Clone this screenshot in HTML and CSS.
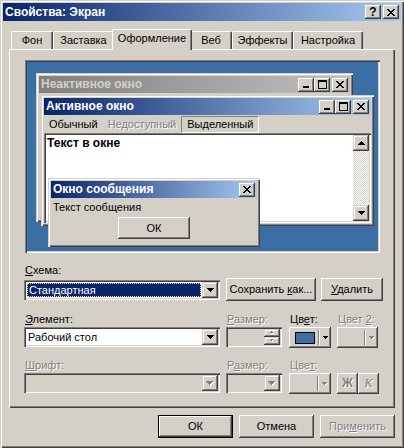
FILE: index.html
```html
<!DOCTYPE html>
<html lang="ru">
<head>
    <meta charset="UTF-8">
    <title>Свойства: Экран</title>
    <link rel="stylesheet" href="styles.css">
</head>
<body>
<div class="window">
    <div class="titlebar">
        <span class="title">Свойства: Экран</span>
        <span class="capbtn help">?</span>
        <span class="capbtn">
            <svg width="8" height="7"><path d="M0 0h2v1H0zM6 0h2v1H6zM1 1h2v1H1zM5 1h2v1H5zM2 2h4v1H2zM3 3h2v1H3zM2 4h4v1H2zM1 5h2v1H1zM5 5h2v1H5zM0 6h2v1H0zM6 6h2v1H6z"/></svg>
        </span>
    </div>

    <div class="tabs">
        <div class="tab w42">Фон</div>
        <div class="tab w61">Заставка</div>
        <div class="tab active">Оформление</div>
        <div class="tab w42">Веб</div>
        <div class="tab w61">Эффекты</div>
        <div class="tab w70">Настройка</div>
    </div>

    <div class="panel">
        <div class="preview">
            <div class="pwin inactive">
                <div class="pcap">
                    <span class="pcap-title">Неактивное окно</span>
                    <span class="capbtn min"><svg width="8" height="7"><path d="M1 5h6v2H1z"/></svg></span>
                    <span class="capbtn max"><svg width="9" height="9"><path d="M0 0h9v2H0zM0 2h1v7H0zM8 2h1v7H8zM1 8h7v1H1z"/></svg></span>
                    <span class="capbtn"><svg width="8" height="7"><path d="M0 0h2v1H0zM6 0h2v1H6zM1 1h2v1H1zM5 1h2v1H5zM2 2h4v1H2zM3 3h2v1H3zM2 4h4v1H2zM1 5h2v1H1zM5 5h2v1H5zM0 6h2v1H0zM6 6h2v1H6z"/></svg></span>
                </div>
            </div>

            <div class="pwin active-win">
                <div class="pcap">
                    <span class="pcap-title">Активное окно</span>
                    <span class="capbtn min"><svg width="8" height="7"><path d="M1 5h6v2H1z"/></svg></span>
                    <span class="capbtn max"><svg width="9" height="9"><path d="M0 0h9v2H0zM0 2h1v7H0zM8 2h1v7H8zM1 8h7v1H1z"/></svg></span>
                    <span class="capbtn"><svg width="8" height="7"><path d="M0 0h2v1H0zM6 0h2v1H6zM1 1h2v1H1zM5 1h2v1H5zM2 2h4v1H2zM3 3h2v1H3zM2 4h4v1H2zM1 5h2v1H1zM5 5h2v1H5zM0 6h2v1H0zM6 6h2v1H6z"/></svg></span>
                </div>
                <div class="pmenu">
                    <span>Обычный</span>
                    <span class="dis">Недоступный</span>
                    <span class="sel">Выделенный</span>
                </div>
                <div class="ptext">
                    <div class="ptext-body">Текст в окне</div>
                    <div class="vscroll">
                        <span class="sbtn"><svg width="7" height="4"><path d="M3 0h1v1H3zM2 1h3v1H2zM1 2h5v1H1zM0 3h7v1H0z"/></svg></span>
                        <span class="track"></span>
                        <span class="sbtn"><svg width="7" height="4"><path d="M0 0h7v1H0zM1 1h5v1H1zM2 2h3v1H2zM3 3h1v1H3z"/></svg></span>
                    </div>
                </div>
            </div>

            <div class="pwin msg">
                <div class="pcap">
                    <span class="pcap-title">Окно сообщения</span>
                    <span class="capbtn"><svg width="8" height="7"><path d="M0 0h2v1H0zM6 0h2v1H6zM1 1h2v1H1zM5 1h2v1H5zM2 2h4v1H2zM3 3h2v1H3zM2 4h4v1H2zM1 5h2v1H1zM5 5h2v1H5zM0 6h2v1H0zM6 6h2v1H6z"/></svg></span>
                </div>
                <div class="msgtext">Текст сообщения</div>
                <div class="btn msgbtn">ОК</div>
            </div>
        </div>

        <div class="controls">
            <div class="lbl first"><u>С</u>хема:</div>
            <div class="row1">
                <div class="combo c196">
                    <span class="combo-val sel">Стандартная</span>
                    <span class="dropbtn"><svg width="7" height="4"><path d="M0 0h7v1H0zM1 1h5v1H1zM2 2h3v1H2zM3 3h1v1H3z"/></svg></span>
                </div>
                <div class="btn save"><span>Сохранить <u>к</u>ак...</span></div>
                <div class="btn del"><span><u>У</u>далить</span></div>
            </div>

            <div class="grid">
                <div class="lbl"><u>Э</u>лемент:</div>
                <div class="lbl dis"><u>Р</u>азмер:</div>
                <div class="lbl">Цв<u>е</u>т:</div>
                <div class="lbl dis">Цвет <u>2</u>:</div>

                <div class="combo c196">
                    <span class="combo-val">Рабочий стол</span>
                    <span class="dropbtn"><svg width="7" height="4"><path d="M0 0h7v1H0zM1 1h5v1H1zM2 2h3v1H2zM3 3h1v1H3z"/></svg></span>
                </div>
                <div class="combo c56 off">
                    <span class="combo-val"></span>
                    <span class="spinbtns">
                        <span class="spinbtn"><svg width="6" height="4"><path fill="#fff" d="M3 1h1v1H3zM2 2h3v1H2z"/><path fill="#808080" d="M2 0h1v1H2zM1 1h3v1H1z"/></svg></span>
                        <span class="spinbtn"><svg width="6" height="4"><path fill="#fff" d="M2 1h3v1H2zM3 2h1v1H3z"/><path fill="#808080" d="M1 0h3v1H1zM2 1h1v1H2z"/></svg></span>
                    </span>
                </div>
                <div class="btn colorbtn">
                    <span class="swatch"></span>
                    <span class="vsep"></span>
                    <svg width="5" height="3"><path d="M0 0h5v1H0zM1 1h3v1H1zM2 2h1v1H2z"/></svg>
                </div>
                <div class="btn colorbtn c41">
                    <span class="swatch empty"></span>
                    <span class="vsep"></span>
                    <svg width="6" height="4"><path fill="#fff" d="M1 1h5v1H1zM2 2h3v1H2zM3 3h1v1H3z"/><path fill="#808080" d="M0 0h5v1H0zM1 1h3v1H1zM2 2h1v1H2z"/></svg>
                </div>

                <div class="lbl dis"><u>Ш</u>рифт:</div>
                <div class="lbl dis">Р<u>а</u>змер:</div>
                <div class="lbl dis">Цве<u>т</u>:</div>
                <div></div>

                <div class="combo c196 off">
                    <span class="combo-val"></span>
                    <span class="dropbtn"><svg width="8" height="5"><path fill="#fff" d="M1 1h7v1H1zM2 2h5v1H2zM3 3h3v1H3zM4 4h1v1H4z"/><path fill="#808080" d="M0 0h7v1H0zM1 1h5v1H1zM2 2h3v1H2zM3 3h1v1H3z"/></svg></span>
                </div>
                <div class="combo c56 off">
                    <span class="combo-val"></span>
                    <span class="dropbtn"><svg width="8" height="5"><path fill="#fff" d="M1 1h7v1H1zM2 2h5v1H2zM3 3h3v1H3zM4 4h1v1H4z"/><path fill="#808080" d="M0 0h7v1H0zM1 1h5v1H1zM2 2h3v1H2zM3 3h1v1H3z"/></svg></span>
                </div>
                <div class="btn colorbtn">
                    <span class="swatch empty"></span>
                    <span class="vsep"></span>
                    <svg width="6" height="4"><path fill="#fff" d="M1 1h5v1H1zM2 2h3v1H2zM3 3h1v1H3z"/><path fill="#808080" d="M0 0h5v1H0zM1 1h3v1H1zM2 2h1v1H2z"/></svg>
                </div>
                <div class="styles">
                    <div class="btn sq bold">Ж</div>
                    <div class="btn sq italic">К</div>
                </div>
            </div>
        </div>
    </div>

    <div class="footer">
        <div class="btn default">ОК</div>
        <div class="btn">Отмена</div>
        <div class="btn dis"><span>При<u>м</u>енить</span></div>
    </div>
</div>
</body>
</html>
```

FILE: styles.css
```css
* {
    box-sizing: border-box;
}
body {
    margin: 0;
    background: #d4d0c8;
    font-family: "Liberation Sans", Arial, sans-serif;
    font-size: 11px;
    line-height: 13px;
    color: #000;
}
u {
    text-decoration-thickness: 1px;
    text-underline-offset: 1px;
}
.window {
    width: 404px;
    height: 448px;
    padding: 3px;
    background: #d4d0c8;
    box-shadow: inset 1px 1px #d4d0c8, inset 2px 2px #fff, inset -1px -1px #404040, inset -2px -2px #808080;
}

/* title bars */
.titlebar,
.pcap {
    display: flex;
    align-items: center;
    padding: 0 2px;
    color: #fff;
    font-size: 12px;
    font-weight: bold;
    background: linear-gradient(to right, #0a246a, #a6caf0);
}
.titlebar {
    height: 18px;
}
.title,
.pcap-title {
    flex: 1;
    white-space: nowrap;
}
.capbtn {
    width: 16px;
    height: 14px;
    margin-left: 2px;
    display: flex;
    align-items: center;
    justify-content: center;
    color: #000;
    background: #d4d0c8;
    box-shadow: inset -1px -1px #404040, inset 1px 1px #fff, inset -2px -2px #808080;
}
.capbtn.help {
    font-size: 12px;
    font-weight: bold;
    padding-top: 1px;
}
.capbtn.min + .capbtn.max {
    margin-left: 0;
}

/* tabs */
.tabs {
    display: flex;
    align-items: flex-end;
    height: 20px;
    margin-top: 8px;
    padding-left: 8px;
}
.tab {
    height: 18px;
    padding-top: 2px;
    text-align: center;
    white-space: nowrap;
    background: #d4d0c8;
    border: 1px solid #fff;
    border-right-color: #404040;
    border-bottom: 0;
    border-radius: 2px 2px 0 0;
    box-shadow: inset -1px 0 #808080;
}
.w42 { width: 42px; }
.w61 { width: 61px; }
.w70 { width: 70px; }
.tab.active {
    position: relative;
    z-index: 1;
    width: 80px;
    height: 21px;
    margin: 0 -2px -1px;
}

/* panel */
.panel {
    width: 386px;
    height: 359px;
    margin-left: 6px;
    padding: 11px 0 0 16px;
    box-shadow: inset 1px 1px #fff, inset -1px -1px #404040, inset -2px -2px #808080;
}
.preview {
    position: relative;
    width: 355px;
    height: 193px;
    background: #3a6ea5;
    box-shadow: inset 1px 1px #808080, inset 2px 2px #404040, inset -1px -1px #fff, inset -2px -2px #d4d0c8;
}
.pwin {
    position: absolute;
    padding: 3px;
    background: #d4d0c8;
    box-shadow: inset 1px 1px #d4d0c8, inset 2px 2px #fff, inset -1px -1px #404040, inset -2px -2px #808080;
}
.pwin.inactive {
    left: 11px;
    top: 13px;
    width: 317px;
    height: 149px;
}
.pwin.active-win {
    left: 16px;
    top: 35px;
    width: 333px;
    height: 131px;
}
.pwin.msg {
    left: 23px;
    top: 118px;
    width: 212px;
    height: 69px;
}
.pcap {
    height: 17px;
}
.inactive .pcap {
    color: #d4d0c8;
    background: linear-gradient(to right, #808080, #c0c0c0);
}
.pmenu {
    display: flex;
    height: 17px;
    margin-top: 1px;
}
.pmenu span {
    padding: 2px 5px 0;
    white-space: nowrap;
}
.pmenu .dis,
.dis {
    color: #808080;
    text-shadow: 1px 1px #fff;
}
.pmenu .sel {
    padding: 1px 5px 0;
    border: 1px solid;
    border-color: #808080 #fff #fff #808080;
}
.ptext {
    display: flex;
    height: 90px;
    padding: 2px;
    background: #fff;
    box-shadow: inset 1px 1px #808080, inset 2px 2px #404040, inset -1px -1px #fff, inset -2px -2px #d4d0c8;
}
.ptext-body {
    flex: 1;
    padding: 2px 0 0 1px;
    font-size: 12px;
    font-weight: bold;
}
.vscroll {
    width: 16px;
    display: flex;
    flex-direction: column;
}
.track {
    flex: 1;
    background: repeating-conic-gradient(#fff 0% 25%, #d4d0c8 0% 50%) 0 0 / 2px 2px;
}
.sbtn,
.dropbtn {
    width: 16px;
    height: 16px;
    display: flex;
    align-items: center;
    justify-content: center;
    background: #d4d0c8;
    box-shadow: inset -1px -1px #404040, inset 1px 1px #d4d0c8, inset -2px -2px #808080, inset 2px 2px #fff;
}
.msgtext {
    padding: 3px 0 0 2px;
}
.msgbtn {
    width: 72px;
    height: 22px;
    margin: 3px auto 0;
}

/* buttons */
.btn {
    display: flex;
    align-items: center;
    justify-content: center;
    white-space: nowrap;
    background: #d4d0c8;
    box-shadow: inset -1px -1px #404040, inset 1px 1px #fff, inset -2px -2px #808080;
}
.btn.default {
    border: 1px solid #000;
}

/* controls */
.controls {
    margin-left: -1px;
}
.lbl {
    height: 13px;
    white-space: nowrap;
}
.lbl.first {
    margin-top: 11px;
    margin-left: 1px;
}
.row1 {
    display: flex;
    align-items: center;
    height: 23px;
    margin-top: 1px;
}
.save {
    width: 90px;
    height: 23px;
    margin-left: 6px;
}
.del {
    width: 62px;
    height: 23px;
    margin-left: 5px;
}
.combo {
    display: flex;
    height: 20px;
    padding: 2px;
    background: #fff;
    box-shadow: inset 1px 1px #808080, inset 2px 2px #404040, inset -1px -1px #fff, inset -2px -2px #d4d0c8;
}
.combo.off {
    background: #d4d0c8;
}
.c196 { width: 196px; }
.c56 { width: 56px; }
.combo-val {
    flex: 1;
    padding: 2px 0 0 2px;
    white-space: nowrap;
}
.combo-val.sel {
    margin: 1px;
    padding: 0 0 0 1px;
    color: #fff;
    background: #0a246a;
    border: 1px dotted #f5db95;
}
.spinbtns {
    width: 16px;
    display: flex;
    flex-direction: column;
}
.spinbtn {
    flex: 1;
    display: flex;
    align-items: center;
    justify-content: center;
    box-shadow: inset -1px -1px #404040, inset 1px 1px #d4d0c8, inset -2px -2px #808080, inset 2px 2px #fff;
}
.grid {
    display: grid;
    grid-template-columns: 202px 63px 48px 1fr;
    grid-template-rows: 14px 32px 14px 21px;
    margin-top: 12px;
}
.grid .lbl {
    padding-left: 1px;
}
.colorbtn {
    width: 42px;
    height: 21px;
    padding: 0 3px 0 6px;
    justify-content: flex-start;
}
.colorbtn.c41 {
    width: 41px;
}
.swatch {
    width: 20px;
    height: 12px;
    background: #3a6ea5;
    border: 1px solid #000;
}
.swatch.empty {
    background: none;
    border: 0;
}
.vsep {
    width: 2px;
    height: 15px;
    margin: 0 3px 0 3px;
    border-left: 1px solid #808080;
    border-right: 1px solid #fff;
}
.styles {
    display: flex;
}
.sq {
    width: 21px;
    height: 21px;
    color: #808080;
    text-shadow: 1px 1px #fff;
    font-size: 12px;
}
.bold {
    font-weight: bold;
}
.italic {
    font-style: italic;
    font-family: "Liberation Serif", serif;
}

/* footer */
.footer {
    display: flex;
    justify-content: flex-end;
    gap: 6px;
    margin-top: 7px;
    padding-right: 6px;
}
.footer .btn {
    width: 75px;
    height: 23px;
}
```
